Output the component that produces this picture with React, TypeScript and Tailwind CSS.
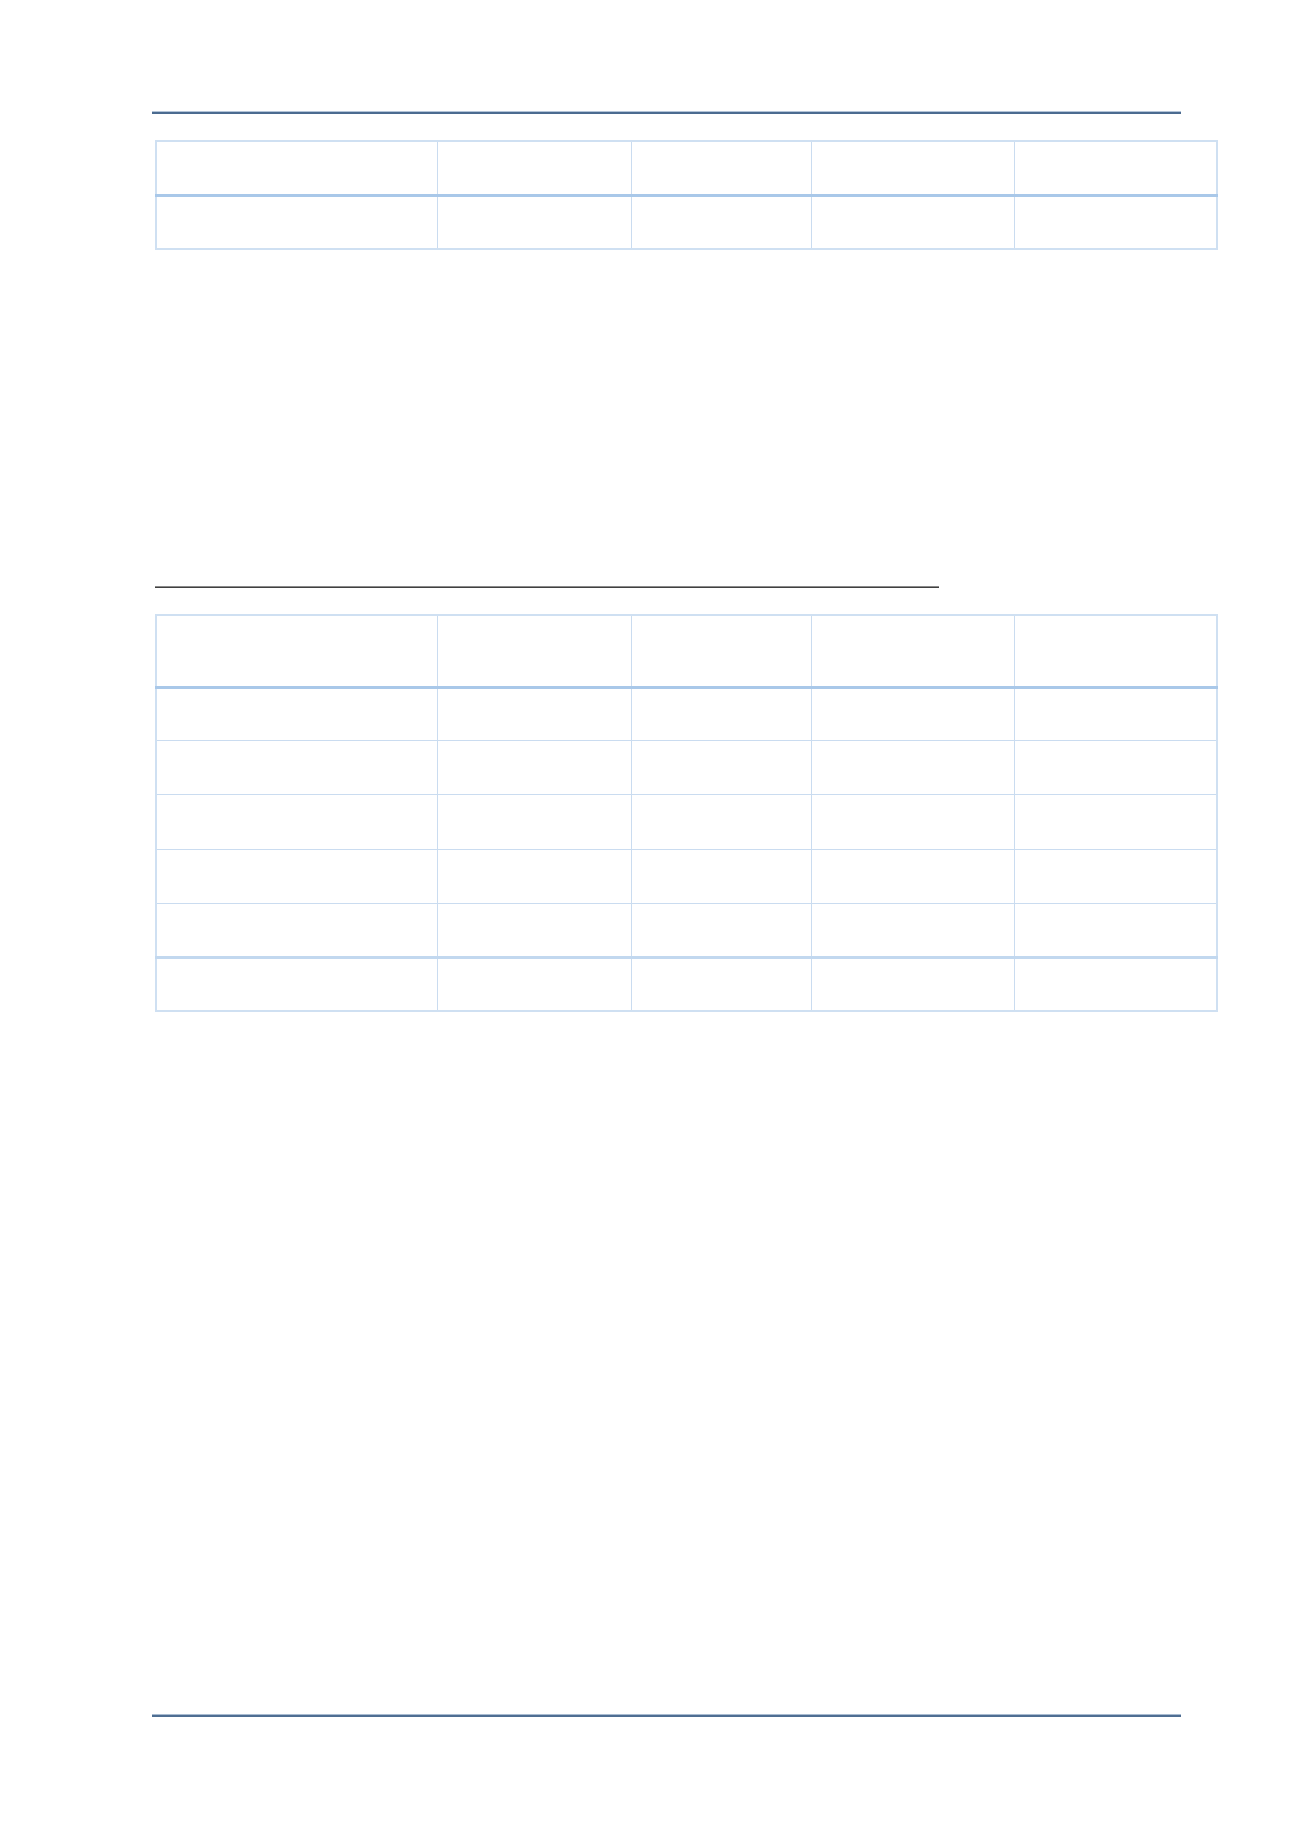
const cols = [281, 194, 180, 203, 203];

function Row({ h, top }: { h: number; top?: string }) {
  return (
    <tr style={{ height: h }}>
      {cols.map((w, i) => (
        <td
          key={i}
          style={{ width: w }}
          className={`border border-[#cadcf0] p-0 ${top ?? ""}`}
        />
      ))}
    </tr>
  );
}

function Grid({ head, rows }: { head: number; rows: { h: number; top?: string }[] }) {
  return (
    <table className="w-[1061px] table-fixed border-collapse border-2 border-[#cfe0f2]">
      <tbody>
        <Row h={head} />
        {rows.map((r, i) => (
          <Row key={i} h={r.h} top={i === 0 ? "border-t-[3px] border-t-[#a9c8e9]" : r.top} />
        ))}
      </tbody>
    </table>
  );
}

export default function App() {
  return (
    <div className="relative h-[1839px] w-[1300px] bg-white font-['Liberation_Sans',sans-serif]">
      <div className="flex flex-col pl-[152px] pt-[111px]">
        <div className="w-[1029px]">
          <div className="h-[1px] bg-[#b3c4d8]" />
          <div className="h-[2px] bg-[#4b6b90]" />
        </div>

        <div className="ml-[3px] mt-[26px]">
          <Grid head={54} rows={[{ h: 54 }]} />
        </div>

        <div className="ml-[3px] mt-[336px] w-[784px]">
          <div className="h-[1px] bg-[#8a8a8a]" />
          <div className="h-[1px] bg-[#404040]" />
        </div>

        <div className="ml-[3px] mt-[26px]">
          <Grid
            head={72}
            rows={[
              { h: 53 },
              { h: 54 },
              { h: 55 },
              { h: 54 },
              { h: 54 },
              { h: 54, top: "border-t-[3px] border-t-[#c2d8ef]" },
            ]}
          />
        </div>

        <div className="mt-[702px] w-[1029px]">
          <div className="h-[1px] bg-[#a8bbd1]" />
          <div className="h-[2px] bg-[#4f6e92]" />
        </div>
      </div>
    </div>
  );
}
